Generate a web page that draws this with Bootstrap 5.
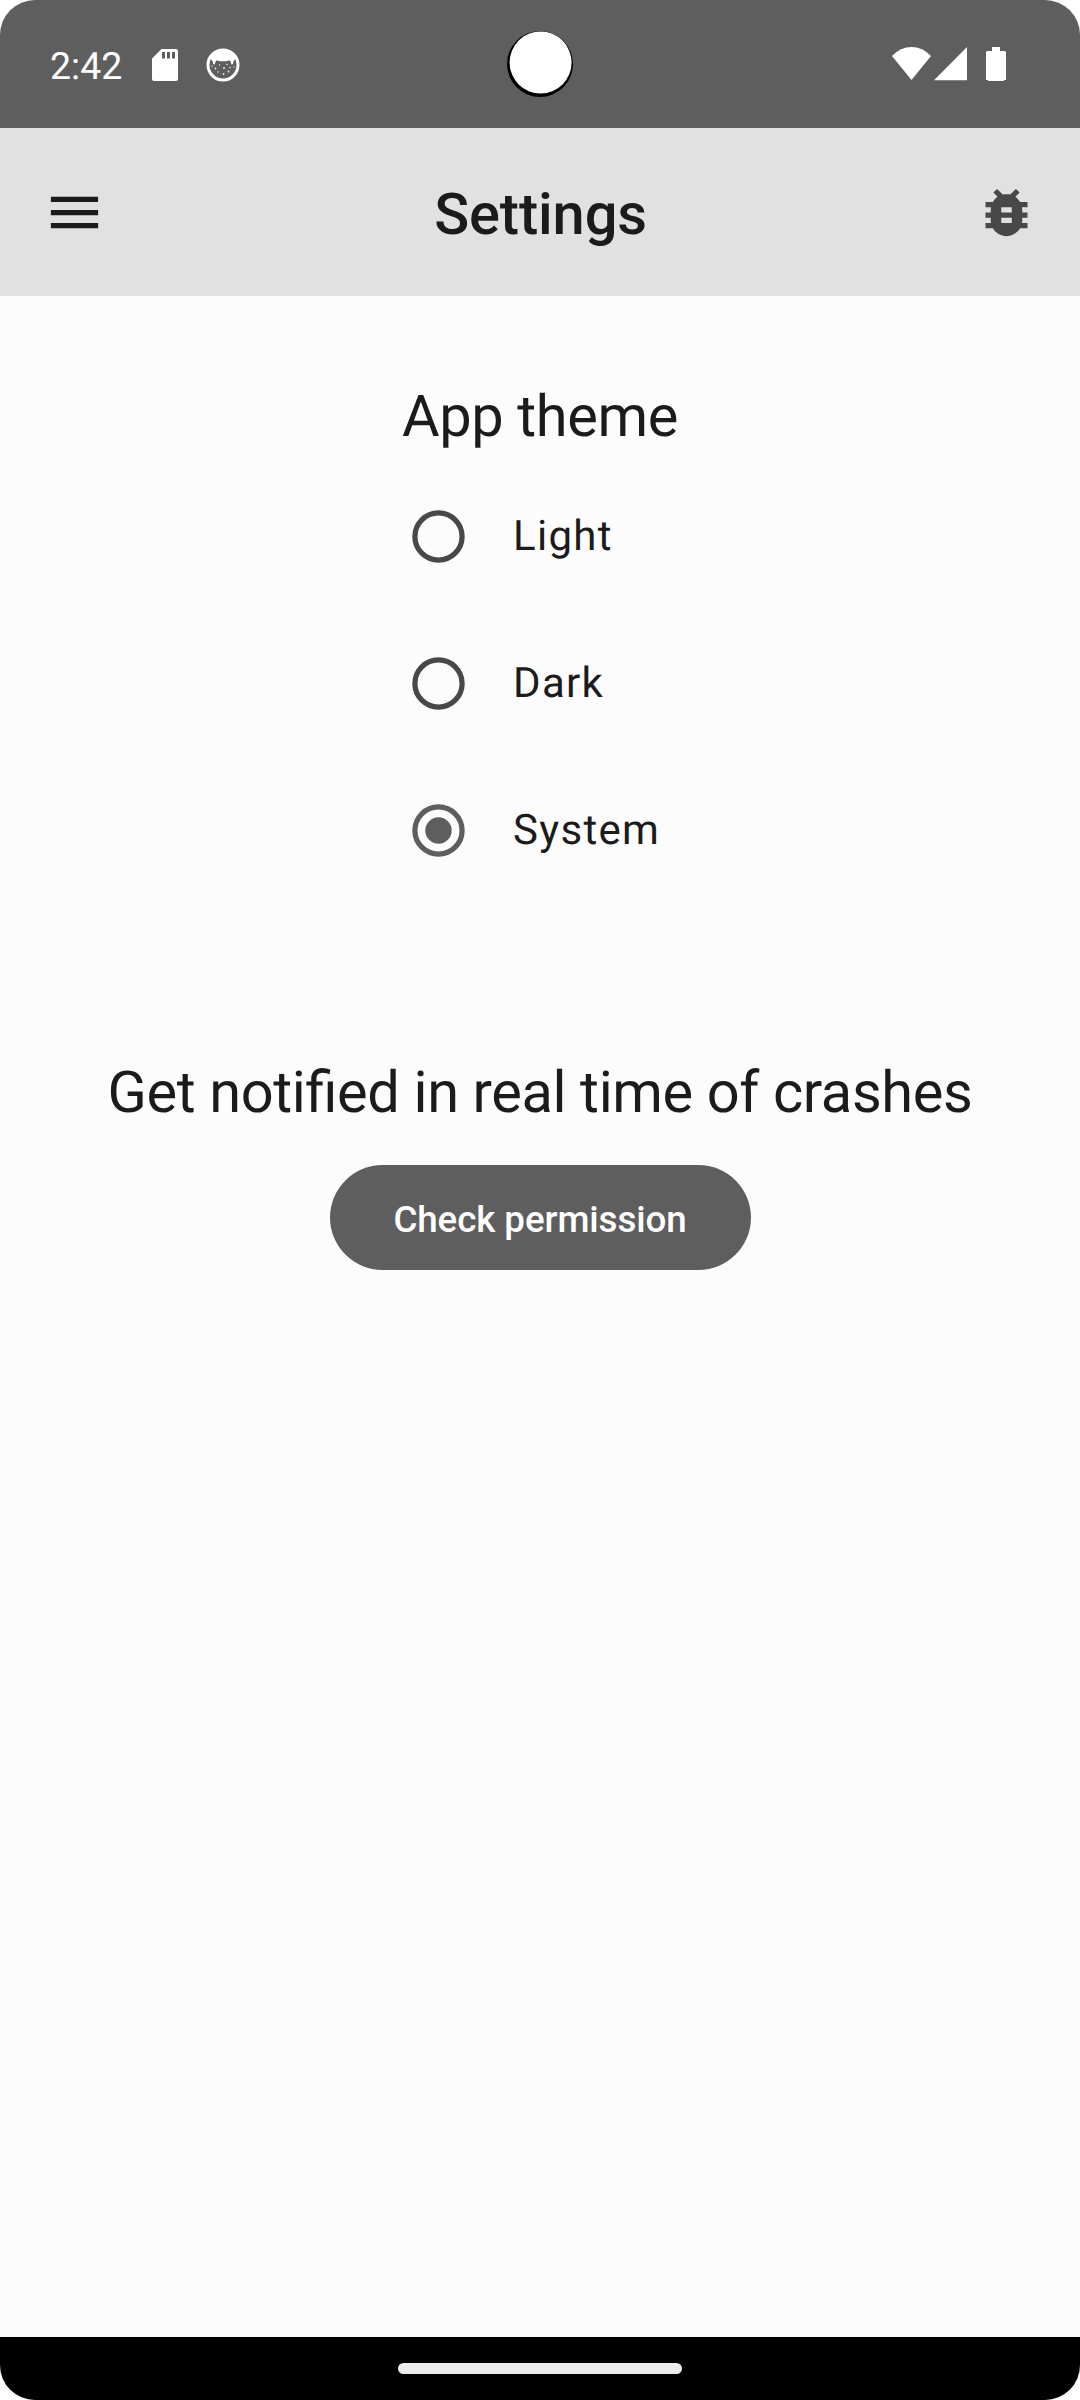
<!DOCTYPE html>
<html lang="en">
<head>
<meta charset="utf-8">
<meta name="viewport" content="width=device-width, initial-scale=1">
<title>Settings</title>
<link rel="stylesheet" href="https://cdn.jsdelivr.net/npm/bootstrap@5.3.0/dist/css/bootstrap.min.css">
<style>
  body { background: #fff; font-family: Roboto, "Noto Sans", sans-serif; color: #1b1b1b; text-rendering: geometricPrecision; }
  svg { display: block; flex: none; }
  .screen { width: 1080px; height: 2400px; border-radius: 35px; background: #fcfcfc; }
  .status-bar { height: 128px; background: #5e5e5e; padding: 0 74px 0 50px; }
  .clock { width: 72px; font-size: 37.5px; line-height: 44px; margin: 5px 30px 0 0; }
  .sd-icon { margin-top: 2px; }
  .cat-icon { margin: 2px 0 0 28px; }
  .signal-icon { margin-left: 3px; }
  .battery-icon { margin-left: 19px; }
  .camera { left: 507px; top: 31px; }
  .app-bar { height: 168px; background: #e1e1e1; padding: 0 42px 0 43px; }
  .app-title { font-size: 57.75px; line-height: 74px; font-weight: 500; margin-top: 6px; letter-spacing: -.12px; }
  .icon-btn { line-height: 0; }
  .content-area { padding-top: 84px; }
  .section-title { font-size: 57.75px; line-height: 74px; font-weight: 400; letter-spacing: -.38px; font-feature-settings: "liga" 1; }
  .theme-list { width: 268px; margin: 8px 0 152px; padding-top: 1px; }
  .theme-option { height: 147px; gap: 48px; font-size: 42px; letter-spacing: 1.3125px; color: #1b1b1b; padding-left: 6px; }
  .btn-check-permission { --bs-btn-color: #fff; --bs-btn-bg: #5e5e5e; --bs-btn-hover-bg: #525252; --bs-btn-hover-color: #fff;
    width: 421px; height: 105px; margin-top: 35px; padding: 4px 0 0; font-size: 36.75px; font-weight: 500; letter-spacing: -.1px; border: 0; }
  .nav-strip { height: 63px; padding-top: 26px; }
  .nav-handle { width: 284px; height: 11px; background: #ebebeb; }
</style>
<script src="https://cdn.jsdelivr.net/npm/bootstrap@5.3.0/dist/js/bootstrap.bundle.min.js"></script>
</head>
<body>
<div class="screen d-flex flex-column overflow-hidden">
  <div class="status-bar d-flex align-items-center justify-content-between text-white position-relative">
    <div class="d-flex align-items-center">
      <span class="clock">2:42</span>
      <svg class="sd-icon" width="26" height="32" viewBox="0 0 26 32"><path fill="#fff" fill-rule="evenodd" d="M9.500 0H24a2 2 0 0 1 2 2v28a2 2 0 0 1-2 2H2a2 2 0 0 1-2-2V9.500zM10 3v6.500h3V3zm5 0v6.500h3V3zm5 0v6.500h3V3z"/></svg>
      <svg class="cat-icon" width="34" height="34" viewBox="0 0 34 34">
        <circle cx="17" cy="17" r="15" fill="none" stroke="#fff" stroke-width="3"/>
        <path fill="#fff" d="M4 9Q8 2 17 2t13 7l-2 4-1 1 .3 2-1.800.5-1.300-3.700-2-.3-2 .8h-6.400l-2-.8-1.800.3-1.400 3.700-1.800-.5.3-2-1-1z"/>
        <g fill="#e8e8e8"><circle cx="6" cy="18" r=".7"/><circle cx="9.500" cy="20.500" r=".9"/><circle cx="13.500" cy="17" r=".7"/><circle cx="18" cy="20" r="1"/><circle cx="21" cy="16.500" r=".8"/><circle cx="24" cy="19.500" r=".8"/><circle cx="28" cy="19" r=".7"/><circle cx="12" cy="24" r=".8"/><circle cx="17.500" cy="26" r=".9"/><circle cx="22.500" cy="23.500" r=".9"/></g>
      </svg>
    </div>
    <svg class="camera position-absolute" width="66" height="66" viewBox="0 0 66 66"><circle cx="33" cy="33" r="33" fill="#000"/><circle cx="33.600" cy="31.500" r="31" fill="#fff"/></svg>
    <div class="d-flex align-items-start">
      <svg width="39" height="34" viewBox="0 0 39 34"><path fill="#fff" d="M0 9Q8.500 0 19.500 0T39 9L19.500 33z"/></svg>
      <svg class="signal-icon" width="33" height="34" viewBox="0 0 33 34"><path fill="#fff" d="M0 33.200 33 0v33.200z"/></svg>
      <svg class="battery-icon" width="20" height="34" viewBox="0 0 20 34"><path fill="#fff" d="M6 0h8v4h5l1 1v28h-2v1H2v-1H0V5l1-1h5z"/></svg>
    </div>
  </div>

  <header class="app-bar d-flex align-items-center justify-content-between">
    <button class="icon-btn btn p-0 border-0" aria-label="Menu"><svg width="63" height="63" viewBox="0 0 24 24" fill="#1b1b1b"><path d="M3 18h18v-2H3v2zm0-5h18v-2H3v2zm0-7v2h18V6H3z"/></svg></button>
    <h1 class="app-title mb-0">Settings</h1>
    <button class="icon-btn btn p-0 border-0" aria-label="Report a bug"><svg width="63" height="63" viewBox="0 0 24 24" fill="#484848"><path d="M20 8h-2.810c-.45-.78-1.070-1.450-1.820-1.960L17 4.410 15.590 3l-2.170 2.170C12.960 5.060 12.490 5 12 5c-.49 0-.96.06-1.410.17L8.410 3 7 4.410l1.620 1.630C7.880 6.550 7.260 7.220 6.810 8H4v2h2.090c-.05.33-.09.66-.09 1v1H4v2h2v1c0 .34.04.67.09 1H4v2h2.810c1.040 1.790 2.970 3 5.190 3s4.150-1.210 5.190-3H20v-2h-2.090c.05-.33.09-.66.09-1v-1h2v-2h-2v-1c0-.34-.04-.67-.09-1H20V8zm-6 8h-4v-2h4v2zm0-4h-4v-2h4v2z"/></svg></button>
  </header>

  <main class="content-area flex-grow-1 d-flex flex-column align-items-center">
    <h2 class="section-title mb-0">App theme</h2>
    <div class="theme-list" role="radiogroup" aria-label="App theme">
      <div class="theme-option d-flex align-items-center" role="radio" aria-checked="false">
        <svg width="53" height="53" viewBox="0 0 53 53"><circle cx="26.500" cy="26.500" r="23.600" fill="none" stroke="#484848" stroke-width="5.250"/></svg>
        <span>Light</span>
      </div>
      <div class="theme-option d-flex align-items-center" role="radio" aria-checked="false">
        <svg width="53" height="53" viewBox="0 0 53 53"><circle cx="26.500" cy="26.500" r="23.600" fill="none" stroke="#484848" stroke-width="5.250"/></svg>
        <span>Dark</span>
      </div>
      <div class="theme-option d-flex align-items-center" role="radio" aria-checked="true">
        <svg width="53" height="53" viewBox="0 0 53 53"><circle cx="26.500" cy="26.500" r="23.600" fill="none" stroke="#5e5e5e" stroke-width="5.250"/><circle cx="26.500" cy="26.500" r="13.200" fill="#5e5e5e"/></svg>
        <span>System</span>
      </div>
    </div>
    <h2 class="section-title mb-0">Get notified in real time of crashes</h2>
    <button class="btn btn-check-permission rounded-pill">Check permission</button>
  </main>

  <div class="nav-strip bg-black d-flex justify-content-center">
    <div class="nav-handle rounded-pill"></div>
  </div>
</div>
</body>
</html>
